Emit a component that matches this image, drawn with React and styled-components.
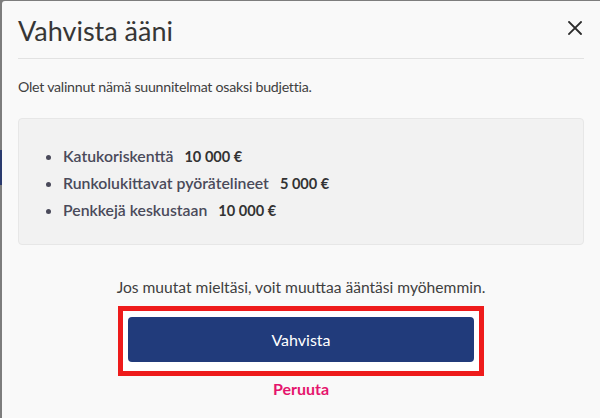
import React from "react";
import styled, { createGlobalStyle } from "styled-components";

const GlobalStyle = createGlobalStyle`
  html, body {
    margin: 0;
    padding: 0;
    height: 100%;
  }
  body {
    font-family: Lato, "Open Sans", sans-serif;
    overflow: hidden;
  }
`;

const Backdrop = styled.div`
  display: flex;
  height: 100vh;
  padding: 1px 0 0 2px;
  box-sizing: border-box;
  background: linear-gradient(
    to bottom,
    #7d7d7d 0,
    #7d7d7d 150px,
    #2a3a6e 150px,
    #2a3a6e 185px,
    #7d7d7d 185px
  );
`;

const Modal = styled.div`
  flex: 1;
  display: flex;
  flex-direction: column;
  padding: 0 16px;
  background: #f9f9f9;
  border-top-left-radius: 3px;
  color: #3b3b3b;
`;

const Header = styled.div`
  display: flex;
  align-items: center;
  justify-content: space-between;
  height: 57px;
  border-bottom: 1px solid #e2e2e2;
`;

const Title = styled.h2`
  margin: 0;
  padding-top: 2px;
  font-size: 27px;
  font-weight: 400;
  color: #363636;
`;

const CloseButton = styled.button`
  display: flex;
  align-items: center;
  justify-content: center;
  width: 20px;
  height: 20px;
  margin: -4px -1px 0 0;
  padding: 0;
  border: none;
  background: none;
  cursor: pointer;
`;

const Intro = styled.p`
  margin: 18px 0 0;
  font-size: 14.2px;
  line-height: 20px;
  letter-spacing: -0.25px;
  color: #404040;
`;

const SummaryBox = styled.div`
  margin-top: 21px;
  height: 127px;
  box-sizing: border-box;
  padding: 24px 0 0 31px;
  background: #f2f2f2;
  border: 1px solid #e7e7e7;
  border-radius: 4px;
`;

const List = styled.ul`
  margin: 0;
  padding: 0 0 0 13px;
`;

const Item = styled.li`
  font-size: 15.8px;
  line-height: 26px;
  font-weight: 600;
  color: #4a4a5a;
`;

const Amount = styled.span`
  margin-left: 11px;
  font-size: 14.6px;
  font-weight: 700;
  color: #333;
`;

const Footer = styled.div`
  display: flex;
  flex-direction: column;
  align-items: center;
  margin-top: 32px;
`;

const Note = styled.p`
  margin: 0;
  font-size: 15.6px;
  line-height: 20px;
  color: #404040;
`;

const Highlight = styled.div`
  margin-top: 9px;
  padding: 6px 5px 9px;
  border: 5px solid #ee1b1b;
  background: #fff;
`;

const ConfirmButton = styled.button`
  display: block;
  width: 346px;
  height: 45px;
  border: none;
  border-radius: 4px;
  background: #213b7b;
  color: #fff;
  font-family: inherit;
  font-size: 16px;
  cursor: pointer;
`;

const CancelLink = styled.a`
  margin-top: 3px;
  font-size: 16px;
  line-height: 20px;
  font-weight: 700;
  color: #e5146d;
  text-decoration: none;
  cursor: pointer;
`;

const items = [
  { name: "Katukoriskenttä", amount: "10 000 €" },
  { name: "Runkolukittavat pyörätelineet", amount: "5 000 €" },
  { name: "Penkkejä keskustaan", amount: "10 000 €" },
];

const App = () => {
  return (
    <>
      <GlobalStyle />
      <Backdrop>
        <Modal>
          <Header>
            <Title>Vahvista ääni</Title>
            <CloseButton aria-label="Sulje">
              <svg width="14" height="14" viewBox="0 0 14 14">
                <path
                  d="M1 1L13 13M13 1L1 13"
                  stroke="#2b2b2b"
                  strokeWidth="1.8"
                  strokeLinecap="square"
                />
              </svg>
            </CloseButton>
          </Header>
          <Intro>Olet valinnut nämä suunnitelmat osaksi budjettia.</Intro>
          <SummaryBox>
            <List>
              {items.map((item) => (
                <Item key={item.name}>
                  {item.name}
                  <Amount>{item.amount}</Amount>
                </Item>
              ))}
            </List>
          </SummaryBox>
          <Footer>
            <Note>Jos muutat mieltäsi, voit muuttaa ääntäsi myöhemmin.</Note>
            <Highlight>
              <ConfirmButton>Vahvista</ConfirmButton>
            </Highlight>
            <CancelLink>Peruuta</CancelLink>
          </Footer>
        </Modal>
      </Backdrop>
    </>
  );
};

export default App;
